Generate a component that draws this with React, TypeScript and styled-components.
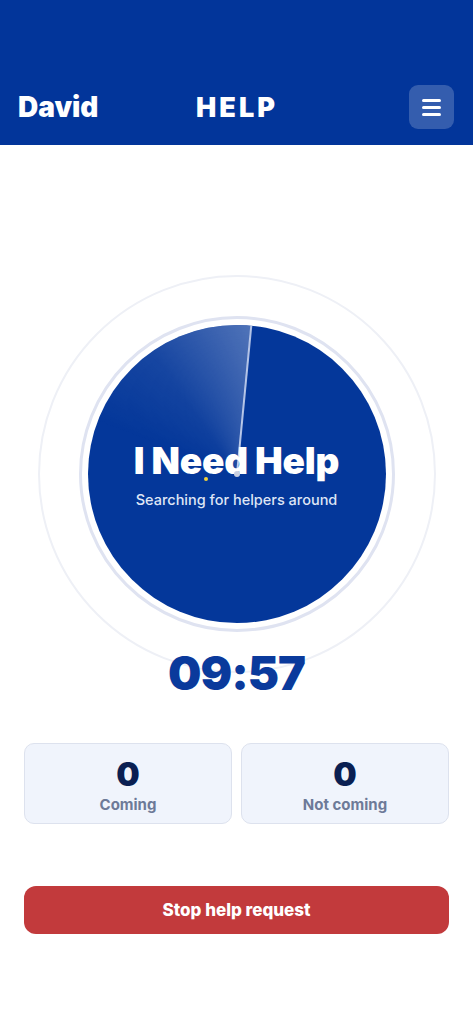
import React from "react";
import styled, { createGlobalStyle } from "styled-components";

const Global = createGlobalStyle`
  html, body { margin: 0; padding: 0; background: #ffffff; }
  body { font-family: Inter, "Noto Sans", sans-serif; -webkit-font-smoothing: antialiased; }
  * { box-sizing: border-box; }
`;

const Page = styled.div`
  width: 473px;
  min-height: 1024px;
  background: #ffffff;
  display: flex;
  flex-direction: column;
`;

const Header = styled.header`
  height: 145px;
  background: #02359a;
  display: grid;
  grid-template-columns: 1fr auto 1fr;
  align-items: center;
  align-content: end;
  padding: 0 19px 16px 18px;
`;

const UserName = styled.div`
  color: #ffffff;
  font-size: 28px;
  font-weight: 900;
  letter-spacing: 0px;
`;

const Title = styled.div`
  color: #ffffff;
  font-size: 27px;
  font-weight: 900;
  letter-spacing: 3px;
  margin-left: 2px;
`;

const MenuButton = styled.button`
  justify-self: end;
  width: 45px;
  height: 44px;
  border: none;
  border-radius: 9px;
  background: rgba(255, 255, 255, 0.2);
  display: flex;
  flex-direction: column;
  align-items: center;
  justify-content: center;
  gap: 4px;
  padding: 0;
`;

const MenuBar = styled.span`
  width: 19px;
  height: 3px;
  border-radius: 2px;
  background: #ffffff;
`;

const Main = styled.main`
  display: flex;
  flex-direction: column;
  align-items: center;
  padding: 130px 24px 0 24px;
`;

const Radar = styled.div`
  position: relative;
  width: 398px;
  height: 398px;
  border-radius: 50%;
  border: 2px solid #eef0f6;
  display: flex;
  align-items: center;
  justify-content: center;
`;

const InnerRing = styled.div`
  width: 316px;
  height: 316px;
  border-radius: 50%;
  border: 3px solid #dfe3f1;
  display: flex;
  align-items: center;
  justify-content: center;
`;

const Disc = styled.div`
  position: relative;
  width: 298px;
  height: 298px;
  border-radius: 50%;
  background: #04379a;
  overflow: hidden;
  display: flex;
  flex-direction: column;
  align-items: center;
  justify-content: center;
`;

const Sweep = styled.div`
  position: absolute;
  inset: 0;
  border-radius: 50%;
  background: conic-gradient(
    from -70deg at 50% 50%,
    rgba(255, 255, 255, 0) 0deg,
    rgba(255, 255, 255, 0.08) 35deg,
    rgba(255, 255, 255, 0.3) 75deg,
    rgba(255, 255, 255, 0) 75.5deg
  );
  -webkit-mask-image: radial-gradient(circle at 50% 50%, rgba(0,0,0,0.4) 0%, #000 70%);
  mask-image: radial-gradient(circle at 50% 50%, rgba(0,0,0,0.4) 0%, #000 70%);
`;

const SweepLine = styled.div`
  position: absolute;
  left: calc(50% - 1px);
  bottom: 50%;
  width: 2px;
  height: 150px;
  background: rgba(235, 240, 255, 0.75);
  transform-origin: 50% 100%;
  transform: rotate(5.5deg);
`;

const Dot = styled.div<{ $color: string; $size: number; $x: number; $y: number }>`
  position: absolute;
  width: ${(p) => p.$size}px;
  height: ${(p) => p.$size}px;
  border-radius: 50%;
  background: ${(p) => p.$color};
  left: ${(p) => p.$x}px;
  top: ${(p) => p.$y}px;
  z-index: 2;
`;

const Heading = styled.div`
  position: relative;
  z-index: 1;
  color: #ffffff;
  font-size: 37px;
  font-weight: 900;
  letter-spacing: -0.2px;
  margin-top: 1px;
  line-height: 40px;
`;

const Subtitle = styled.div`
  position: relative;
  z-index: 1;
  color: #dfe5f5;
  font-size: 14.5px;
  font-weight: 500;
  margin-top: 10px;
`;

const Timer = styled.div`
  margin-top: -28px;
  position: relative;
  color: #0a3a9c;
  font-size: 47px;
  font-weight: 900;
  letter-spacing: -1px;
  line-height: 56px;
`;

const Stats = styled.div`
  margin-top: 42px;
  width: 100%;
  display: grid;
  grid-template-columns: 1fr 1fr;
  gap: 9px;
`;

const StatCard = styled.div`
  height: 81px;
  border-radius: 10px;
  background: #f0f4fc;
  border: 1.5px solid #dde2ee;
  display: flex;
  flex-direction: column;
  align-items: center;
  justify-content: center;
  padding-top: 4px;
`;

const StatValue = styled.div`
  color: #0a1f52;
  font-size: 33px;
  font-weight: 900;
  line-height: 34px;
`;

const StatLabel = styled.div`
  color: #6d7a98;
  font-size: 15px;
  font-weight: 700;
  margin-top: 4px;
`;

const StopButton = styled.button`
  margin-top: 62px;
  width: 100%;
  height: 48px;
  border: none;
  border-radius: 12px;
  background: #c23a3c;
  color: #ffffff;
  font-family: Inter, "Noto Sans", sans-serif;
  font-size: 17px;
  font-weight: 800;
`;

export default function App() {
  return (
    <Page>
      <Global />
      <Header>
        <UserName>David</UserName>
        <Title>HELP</Title>
        <MenuButton aria-label="Menu">
          <MenuBar />
          <MenuBar />
          <MenuBar />
        </MenuButton>
      </Header>
      <Main>
        <Radar>
          <InnerRing>
            <Disc>
              <Sweep />
              <SweepLine />
              <Dot $color="#f2d13a" $size={4} $x={116} $y={152} />
              <Dot $color="#c9cfe0" $size={6} $x={146} $y={146} />
              <Heading>I Need Help</Heading>
              <Subtitle>Searching for helpers around</Subtitle>
            </Disc>
          </InnerRing>
        </Radar>
        <Timer>09:57</Timer>
        <Stats>
          <StatCard>
            <StatValue>0</StatValue>
            <StatLabel>Coming</StatLabel>
          </StatCard>
          <StatCard>
            <StatValue>0</StatValue>
            <StatLabel>Not coming</StatLabel>
          </StatCard>
        </Stats>
        <StopButton>Stop help request</StopButton>
      </Main>
    </Page>
  );
}
